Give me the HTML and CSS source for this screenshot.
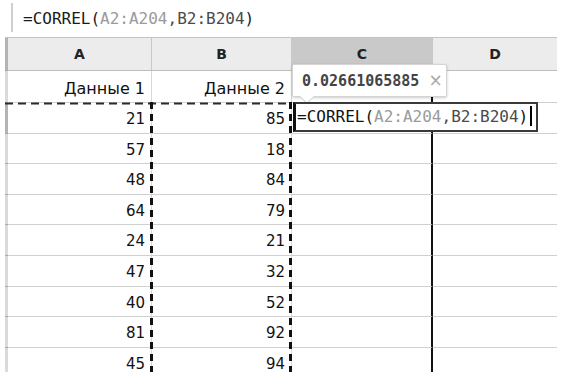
FILE: index.html
```html
<!DOCTYPE html>
<html lang="ru">
<head>
    <meta charset="UTF-8">
    <link rel="stylesheet" href="styles.css">
    <title>CORREL</title>
</head>
<body>
    <div class="formula-bar">
        <span class="fx-line"></span>
        <span class="formula">=CORREL(<span class="ref-a">A2:A204</span><span class="ref-b">,B2:B204</span>)</span>
    </div>

    <div class="sheet">
        <div class="grid">
            <div class="rh rh-dark"></div>
            <div class="hd">A</div>
            <div class="hd">B</div>
            <div class="hd hd-sel">C</div>
            <div class="hd hd-last">D</div>

            <div class="rh"></div>
            <div class="cell first">Данные 1</div>
            <div class="cell first">Данные 2</div>
            <div class="cell first col-c"></div>
            <div class="cell first col-d"></div>
        </div>
        <div class="grid rows" id="rows"></div>

        <svg class="marquee" width="552" height="335">
            <line x1="0" y1="65.5" x2="287" y2="65.5" stroke="#2a2a2a" stroke-width="2" stroke-dasharray="8 5"/>
            <line x1="146.5" y1="64" x2="146.5" y2="335" stroke="#111" stroke-width="3" stroke-dasharray="7 5"/>
            <line x1="285.5" y1="64" x2="285.5" y2="335" stroke="#111" stroke-width="3" stroke-dasharray="7 5"/>
        </svg>

        <div class="tip">0.02661065885<span class="tip-close">×</span></div>

        <div class="editor">=CORREL(<span class="ref-a">A2:A204</span><span class="ref-b">,B2:B204</span>)<span class="caret"></span></div>
    </div>

    <script>
        const data = [[21, 85], [57, 18], [48, 84], [64, 79], [24, 21], [47, 32], [40, 52], [81, 92], [45, 94]];
        const rows = document.getElementById('rows');
        data.forEach((row, i) => {
            rows.innerHTML += `
                <div class="rh ${i === 0 ? 'rh-dark' : ''}"></div>
                <div class="cell">${row[0]}</div>
                <div class="cell">${row[1]}</div>
                <div class="cell col-c"></div>
                <div class="cell col-d"></div>
            `;
        });
    </script>
</body>
</html>
```

FILE: styles.css
```css
body {
    margin: 0;
    padding: 0;
    background: #fff;
    color: #1a1a1a;
    font-family: 'DejaVu Sans', sans-serif;
    overflow: hidden;
}

.formula-bar {
    height: 37px;
    display: flex;
    align-items: flex-start;
}

.fx-line {
    width: 2px;
    height: 29px;
    margin: 3px 0 0 11px;
    background: #cfcfcf;
}

.formula {
    margin: 9px 0 0 10px;
    font-family: 'DejaVu Sans Mono', monospace;
    font-size: 16px;
    line-height: 19px;
    color: #1a1a1a;
}

.ref-a {
    color: #9a9a9a;
}

.ref-b {
    color: #4a4a4a;
}

.sheet {
    position: relative;
    margin-left: 5px;
    width: 552px;
    height: 335px;
    overflow: hidden;
    border-top: 1px solid #c4c4c4;
    box-sizing: border-box;
}

.grid {
    display: grid;
    grid-template-columns: 3px 144px 140px 141px 124px;
    grid-template-rows: 33px 32px;
}

.grid.rows {
    grid-template-rows: repeat(9, 30.6px);
}

.grid > div {
    box-sizing: border-box;
}

.rh {
    background: #dadada;
    border-bottom: 1px solid #a8a8a8;
}

.rh-dark {
    background: #b4b4b4;
}

.hd {
    background: #ececec;
    border-bottom: 1px solid #bdbdbd;
    border-right: 1px solid #c8c8c8;
    text-align: center;
    font-size: 14px;
    font-weight: bold;
    line-height: 32px;
    color: #222;
}

.hd-sel {
    background: #c9c9c9;
}

.hd-last {
    border-right: none;
}

.cell {
    border-bottom: 1px solid #d0d0d0;
    border-right: 1px solid #d8d8d8;
    text-align: right;
    padding: 8px 6px 0 0;
    font-size: 15px;
    line-height: 17px;
    color: #111;
}

.cell.first {
    padding-top: 9px;
    font-size: 16px;
}

.col-c {
    border-right: 2px solid #111;
}

.col-d {
    border-right: none;
}

.marquee {
    position: absolute;
    top: 0;
    left: 0;
}

.tip {
    position: absolute;
    left: 287px;
    top: 26px;
    width: 155px;
    height: 33px;
    box-sizing: border-box;
    padding-left: 9px;
    background: #fff;
    border: 1px solid #d4d4d4;
    border-radius: 2px;
    box-shadow: 0 1px 3px rgba(0,0,0,0.2);
    font-family: 'DejaVu Sans Mono', monospace;
    font-size: 15px;
    font-weight: bold;
    line-height: 31px;
    color: #444;
}

.tip::after {
    content: '';
    position: absolute;
    left: 9px;
    bottom: -6px;
    width: 9px;
    height: 9px;
    background: #fff;
    border-right: 1px solid #d4d4d4;
    border-bottom: 1px solid #d4d4d4;
    transform: rotate(45deg);
}

.tip-close {
    margin-left: 9px;
    font-family: 'DejaVu Sans', sans-serif;
    font-weight: normal;
    font-size: 17px;
    color: #a8a8a8;
}

.editor {
    position: absolute;
    left: 288px;
    top: 64px;
    width: 245px;
    height: 30px;
    box-sizing: border-box;
    padding-left: 1px;
    background: #fff;
    border: 2px solid #3a3a3a;
    border-left: 3px solid #111;
    font-family: 'DejaVu Sans Mono', monospace;
    font-size: 16px;
    line-height: 26px;
    color: #111;
    white-space: nowrap;
}

.caret {
    display: inline-block;
    width: 2px;
    height: 20px;
    margin-left: 2px;
    vertical-align: -4px;
    background: #000;
}
```
